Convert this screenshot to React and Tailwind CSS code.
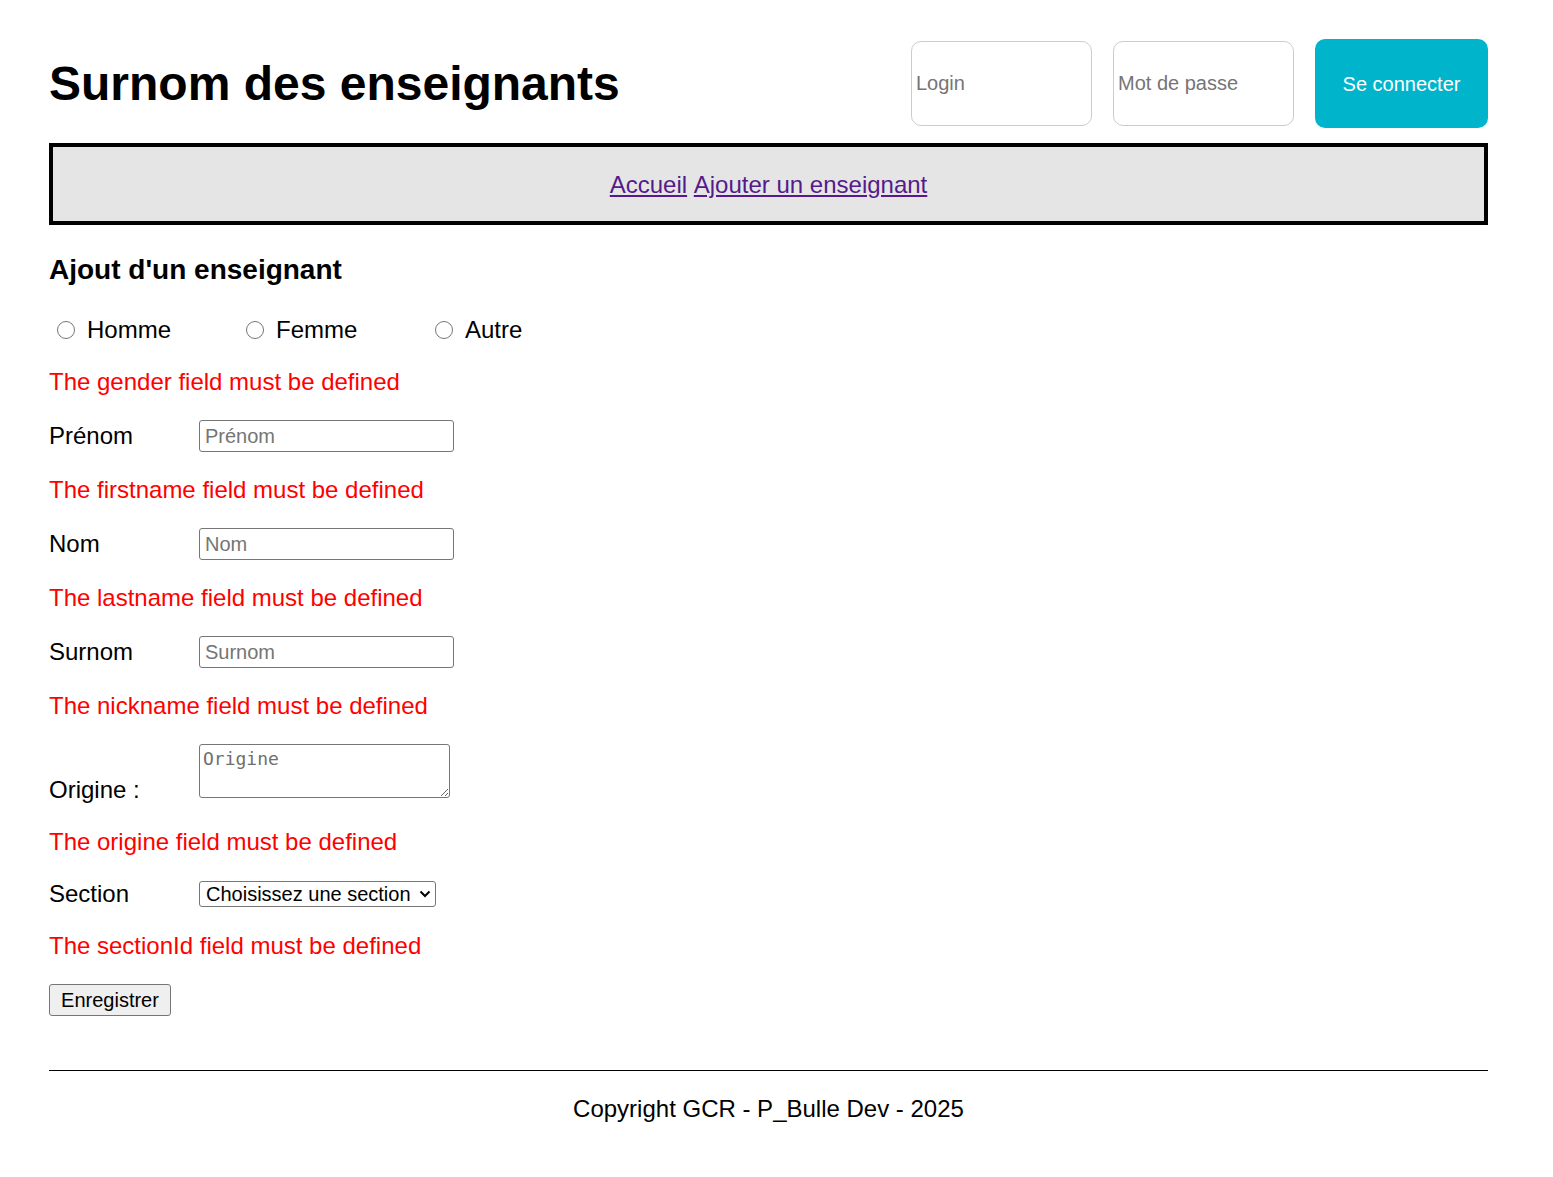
import React, { useState } from 'react';

const errorClass = 'mt-[24px] text-[24px] leading-[28px] text-[#ff0000]';

const FieldRow = ({ label, placeholder }) => (
  <div className="mt-[24px] flex items-center h-[32px]">
    <label className="w-[150px] text-[24px] leading-[28px]">{label}</label>
    <input
      type="text"
      placeholder={placeholder}
      className="w-[255px] h-[32px] border border-[#767676] rounded-[3px] px-[5px] text-[20px] text-black placeholder:text-[#757575] outline-none"
    />
  </div>
);

const App = () => {
  const [gender, setGender] = useState('');

  const genders = ['Homme', 'Femme', 'Autre'];

  return (
    <div className="min-h-[1177px] bg-white text-black font-['Liberation_Sans',Arial,sans-serif] pl-[49px] pr-[65px] pt-[39px]">
      {/* Header */}
      <header className="flex items-center justify-between h-[89px]">
        <h1 className="text-[48px] font-bold leading-[55px]">Surnom des enseignants</h1>
        <div className="flex items-center gap-[21px]">
          <input
            type="text"
            placeholder="Login"
            className="w-[181px] h-[85px] border border-[#cccccc] rounded-[10px] px-[4px] text-[20px] placeholder:text-[#757575] outline-none"
          />
          <input
            type="password"
            placeholder="Mot de passe"
            className="w-[181px] h-[85px] border border-[#cccccc] rounded-[10px] px-[4px] text-[20px] placeholder:text-[#757575] outline-none"
          />
          <button className="w-[173px] h-[89px] rounded-[10px] bg-[#00b4cc] text-white text-[20px] leading-[22px]">
            Se connecter
          </button>
        </div>
      </header>

      {/* Navigation */}
      <nav className="mt-[15px] h-[82px] border-4 border-black bg-[#e5e5e5] flex items-center justify-center pt-[2px] text-[24px] leading-[28px]">
        <a href="#" className="text-[#551a8b] underline">Accueil</a>
        <span>&nbsp;</span>
        <a href="#" className="text-[#551a8b] underline">Ajouter un enseignant</a>
      </nav>

      {/* Form */}
      <main>
        <h3 className="mt-[29px] text-[28px] font-bold leading-[32px]">Ajout d'un enseignant</h3>

        <div className="mt-[30px] flex items-center h-[28px] text-[24px] leading-[28px]">
          {genders.map((g) => (
            <label key={g} className="w-[189px] flex items-center pl-[8px]">
              <input
                type="radio"
                name="gender"
                checked={gender === g}
                onChange={() => setGender(g)}
                className="w-[18px] h-[18px] m-0"
              />
              <span className="ml-[12px]">{g}</span>
            </label>
          ))}
        </div>

        <p className={errorClass}>The gender field must be defined</p>

        <FieldRow label="Prénom" placeholder="Prénom" />
        <p className={errorClass}>The firstname field must be defined</p>

        <FieldRow label="Nom" placeholder="Nom" />
        <p className={errorClass}>The lastname field must be defined</p>

        <FieldRow label="Surnom" placeholder="Surnom" />
        <p className={errorClass}>The nickname field must be defined</p>

        <div className="mt-[24px] flex items-end h-[60px]">
          <label className="w-[150px] text-[24px] leading-[28px]">Origine :</label>
          <textarea
            placeholder="Origine"
            className="w-[251px] h-[54px] mb-[6px] border border-[#767676] rounded-[3px] px-[3px] py-[2px] text-[18px] leading-[24px] font-['DejaVu_Sans_Mono',monospace] placeholder:text-[#6f6f6f] outline-none"
          />
        </div>
        <p className={errorClass}>The origine field must be defined</p>

        <div className="mt-[24px] flex items-center h-[28px]">
          <label className="w-[150px] text-[24px] leading-[28px]">Section</label>
          <div className="relative">
            <select className="appearance-none w-[237px] h-[26px] border border-[#767676] rounded-[3px] pl-[6px] text-[20px] leading-[24px] bg-white text-black outline-none">
              <option>Choisissez une section</option>
            </select>
            <svg className="absolute right-[5px] top-[9px] pointer-events-none" width="12" height="9" viewBox="0 0 12 9">
              <path d="M1.5 1.5 L6 6 L10.5 1.5" fill="none" stroke="black" strokeWidth="2" />
            </svg>
          </div>
        </div>
        <p className={errorClass}>The sectionId field must be defined</p>

        <button className="mt-[24px] h-[32px] w-[122px] border border-[#767676] rounded-[3px] bg-[#efefef] text-[20px] text-black">
          Enregistrer
        </button>
      </main>

      {/* Footer */}
      <footer className="mt-[54px] border-t border-black">
        <p className="mt-[24px] text-center text-[24px] leading-[28px]">Copyright GCR - P_Bulle Dev - 2025</p>
      </footer>
    </div>
  );
};

export default App;
